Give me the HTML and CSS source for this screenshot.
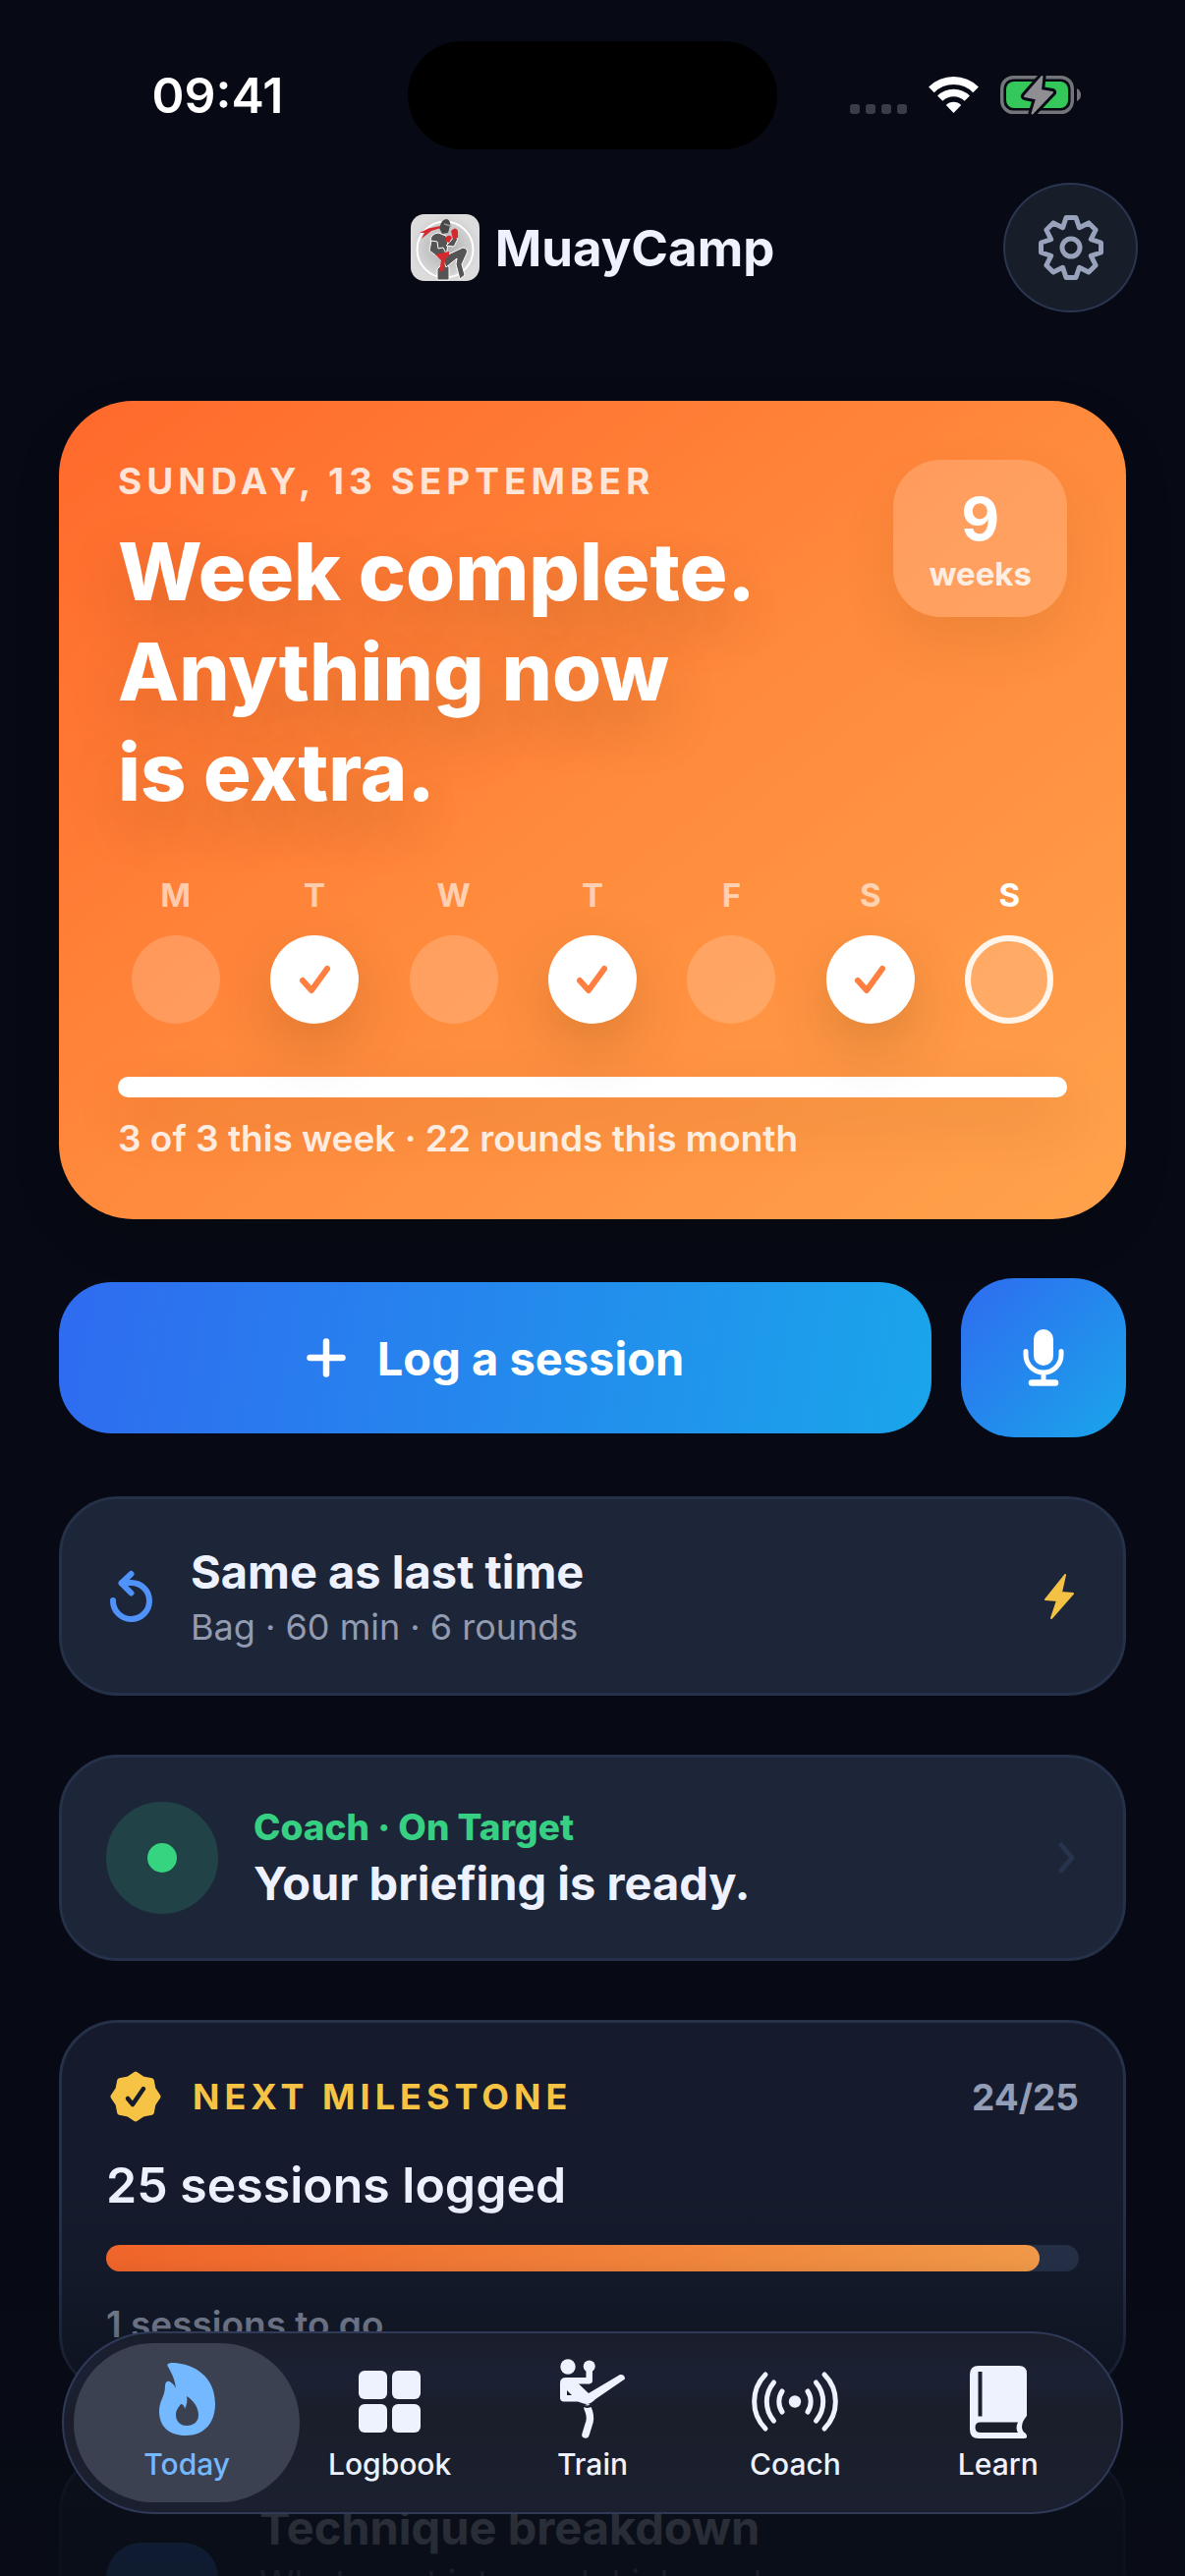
FILE: index.html
```
<!DOCTYPE html>
<html lang="en">

<head>
    <meta charset="UTF-8">
    <meta name="viewport" content="width=device-width, initial-scale=1.0">
    <title>MuayCamp</title>
    <link rel="stylesheet" href="styles.css">
</head>

<body>
    <div class="screen">
        <div class="status-bar">
            <span class="time">09:41</span>
            <span class="island"></span>
            <div class="status-icons">
                <span class="signal"><i></i><i></i><i></i><i></i></span>
                <svg class="wifi" width="51" height="38" viewBox="0 0 51 38" fill="none" stroke="#fff">
                    <path d="M2.9 13.4A32 32 0 0 1 48.1 13.4" stroke-width="8" />
                    <path d="M11.7 22.2A19.5 19.5 0 0 1 39.3 22.2" stroke-width="7.5" />
                    <path d="M25.5 37L17.8 29A11 11 0 0 1 33.2 29Z" fill="#fff" stroke="none" />
                </svg>
                <svg width="82" height="42" viewBox="0 -1 82 42">
                    <rect x="1.7" y="1.7" width="71.6" height="35.6" rx="11.5" fill="none" stroke="#74757b" stroke-width="3.4" />
                    <rect x="6" y="6" width="63" height="27" rx="8" fill="#34c759" />
                    <path d="M78 13Q82 15 82 19.5Q82 24 78 26Z" fill="#74757b" />
                    <path d="M42.500 1L25 21L37 23.500L32.500 38.500L53 17L41 15Z" fill="#8e8e93" stroke="#060913" stroke-width="8" stroke-linejoin="round" />
                    <path d="M42.500 1L25 21L37 23.500L32.500 38.500L53 17L41 15Z" fill="#8e8e93" stroke="#8e8e93" stroke-width="2" stroke-linejoin="round" />
                </svg>
            </div>
        </div>

        <header class="header">
            <div class="brand">
                <svg width="70" height="68" viewBox="0 0 70 68">
                    <defs>
                        <radialGradient id="logo-bg">
                            <stop offset="0" stop-color="#adadad" />
                            <stop offset="1" stop-color="#dcdcdc" />
                        </radialGradient>
                    </defs>
                    <rect width="70" height="68" rx="14" fill="url(#logo-bg)" />
                    <circle cx="35" cy="36" r="28.500" fill="none" stroke="#fff" stroke-width="2" />
                    <g fill="#555" stroke="#fff" stroke-width="1" stroke-linejoin="round">
                        <path d="M27 56L27 67H39L39 54L35 48Z" />
                        <path d="M20 26Q21 20 28 19L36 22L38 31L36 42L28 42L24 34Z" />
                        <path d="M21 27L19 37L28 44L36 40L33 34L28 35L27 28Z" />
                        <path d="M32 44L53 34Q59 35 57 40L52 51L55 62L50 66L46 51L47 45L36 54Z" />
                        <path d="M36 32L44 33L48 25L44 23L40 28Z" />
                    </g>
                    <path d="M31 9Q33 5 37 5Q41 7 40 12L38 19L32 20L29 14Z" fill="#484848" />
                    <g fill="#d42a2e">
                        <path d="M30 12L29 14.500L21 17L11 25L14 19L9 19L18 14.500Z" />
                        <path d="M41 17Q46 12 48 17L48 24L43 26Z" />
                        <path d="M36 23Q40 20 42 24L39 29L36 28Z" />
                        <path d="M25 41L39 38L39 42L35 46L34 57L29 59L31 47Z" />
                    </g>
                    <path d="M34 10L41 12" stroke="#999" stroke-width="1.500" />
                </svg>
                <h1>MuayCamp</h1>
            </div>
            <button class="settings" aria-label="Settings">
                <svg width="66" height="66" viewBox="-33 -33 66 66" fill="none" stroke="#98a2bb" stroke-width="5" stroke-linejoin="round">
                    <path d="M-5-30.500L5-30.500L8.400-20.300L18-25.100L25.100-18L20.300-8.400L30.500-5L30.500 5L20.300 8.400L25.100 18L18 25.100L8.400 20.300L5 30.500L-5 30.500L-8.400 20.300L-18 25.100L-25.100 18L-20.300 8.400L-30.500 5L-30.500-5L-20.300-8.400L-25.100-18L-18-25.100L-8.400-20.300Z" />
                    <circle r="9" />
                </svg>
            </button>
        </header>

        <main class="content">
            <section class="hero">
                <div class="hero-top">
                    <div>
                        <p class="date">SUNDAY, 13 SEPTEMBER</p>
                        <h2>Week complete.<br>Anything now<br>is extra.</h2>
                    </div>
                    <div class="streak">
                        <strong>9</strong>
                        <span>weeks</span>
                    </div>
                </div>
                <div class="days">
                    <div class="day">M<span class="dot"></span></div>
                    <div class="day">T<span class="dot done"><svg width="33" height="30" viewBox="0 0 33 30"><path d="M4 16L13 26L29 4" /></svg></span></div>
                    <div class="day">W<span class="dot"></span></div>
                    <div class="day">T<span class="dot done"><svg width="33" height="30" viewBox="0 0 33 30"><path d="M4 16L13 26L29 4" /></svg></span></div>
                    <div class="day">F<span class="dot"></span></div>
                    <div class="day">S<span class="dot done"><svg width="33" height="30" viewBox="0 0 33 30"><path d="M4 16L13 26L29 4" /></svg></span></div>
                    <div class="day today">S<span class="dot"></span></div>
                </div>
                <div class="week-bar"></div>
                <p class="week-note">3 of 3 this week · 22 rounds this month</p>
            </section>

            <div class="actions">
                <button class="log-btn">
                    <svg width="40" height="40" viewBox="0 0 40 40" stroke="#fff" stroke-width="6.500" stroke-linecap="round">
                        <path d="M20 3.500V36.500M3.500 20H36.500" />
                    </svg>
                    Log a session
                </button>
                <button class="mic-btn" aria-label="Voice log">
                    <svg width="42" height="58" viewBox="0 0 42 58" fill="none" stroke="#fff" stroke-linecap="round">
                        <rect x="11" y="0" width="20" height="37" rx="10" fill="#fff" stroke="none" />
                        <path d="M3 22.500V26A18 18 0 0 0 39 26V22.500M21 45V53" stroke-width="5" />
                        <path d="M9 54.500H33" stroke-width="6.500" />
                    </svg>
                </button>
            </div>

            <button class="card repeat">
                <svg class="repeat-icon" width="50" height="54" viewBox="-4 -1 50 54" fill="none" stroke="#4f93fa" stroke-width="6" stroke-linecap="round" stroke-linejoin="round">
                    <path d="M3 30A18.500 18.500 0 1 0 21.500 12H12" />
                    <path d="M21.500 3L11.500 12.500L21.500 22.500" />
                </svg>
                <span class="card-text">
                    <span class="card-title">Same as last time</span>
                    <span class="card-sub">Bag · 60 min · 6 rounds</span>
                </span>
                <svg width="36" height="46" viewBox="0 0 36 46" fill="#f3c245" stroke="#f3c245" stroke-width="2" stroke-linejoin="round">
                    <path d="M22 1L2 26L14 27L8 45L30 20L18 19Z" />
                </svg>
            </button>

            <a class="card coach" href="#coach">
                <span class="coach-dot"></span>
                <span class="card-text">
                    <span class="card-label">Coach · On Target</span>
                    <span class="card-title">Your briefing is ready.</span>
                </span>
                <svg width="22" height="32" viewBox="0 0 22 32" fill="none" stroke="#28334e" stroke-width="5" stroke-linecap="round" stroke-linejoin="round">
                    <path d="M4 3L15 16L4 29" />
                </svg>
            </a>

            <section class="card milestone">
                <div class="milestone-head">
                    <svg width="58" height="52" viewBox="-30 -26 58 52">
                        <path d="M0-23L7.500-18L16.300-16.300L18-7.500L23 0L18 7.500L16.300 16.300L7.500 18L0 23L-7.500 18L-16.300 16.300L-18 7.500L-23 0L-18-7.500L-16.300-16.300L-7.500-18Z" fill="#f6c344" stroke="#f6c344" stroke-width="5" stroke-linejoin="round" />
                        <path d="M-8 2L-3 8L8-8" fill="none" stroke="#151b2b" stroke-width="4.500" stroke-linecap="round" stroke-linejoin="round" />
                    </svg>
                    <h3>NEXT MILESTONE</h3>
                    <span class="count">24/25</span>
                </div>
                <p class="milestone-name">25 sessions logged</p>
                <div class="progress">
                    <div class="progress-fill" style="width: 96%"></div>
                </div>
                <p class="card-sub to-go">1 sessions to go</p>
            </section>

            <section class="card lesson">
                <span class="lesson-icon"></span>
                <span class="card-text">
                    <span class="card-title">Technique breakdown</span>
                    <span class="card-sub">What went into each kick, and</span>
                </span>
            </section>
        </main>

        <div class="fade"></div>

        <nav class="tab-bar">
            <a class="tab active" href="#today">
                <svg width="57" height="82" viewBox="0 -4 57 82" fill="currentColor" fill-rule="evenodd">
                    <path d="M9 4C7 1 10 0 14 0C36 1 57 14 57 42C57 61 46 74 27 74C10 74 0 65 0 49C0 39 6 34 6 24C6 18 10 18 12 20C15 22 16 24 17 26C16 17 13 11 9 4ZM28 34C29 39 28 43 26 47C26 44 24 42 22 42C20 45 17 48 17 53C17 59 21 64 28 64C35 64 40 60 40 53C40 44 33 37 28 34Z" />
                </svg>
                Today
            </a>
            <a class="tab" href="#logbook">
                <svg width="64" height="82" viewBox="0 -12 64 82" fill="currentColor">
                    <rect x="0" y="0" width="29" height="29" rx="6" />
                    <rect x="34" y="0" width="29" height="29" rx="6" />
                    <rect x="0" y="34" width="29" height="29" rx="6" />
                    <rect x="34" y="34" width="29" height="29" rx="6" />
                </svg>
                Logbook
            </a>
            <a class="tab" href="#train">
                <svg width="66" height="82" viewBox="0 0 66 82" fill="currentColor">
                    <circle cx="8" cy="8" r="7.700" />
                    <circle cx="29.700" cy="7.500" r="6" />
                    <path d="M29.700 9V22" stroke="currentColor" stroke-width="6.500" stroke-linecap="round" />
                    <path d="M0 24.500Q0 19 6 19H30V25.500H19L29 35L61 16Q66 15.500 66 20.500L36 41Q30 47.500 24 45.500L18 43.500H4Q0 43.500 0 39.500ZM7 32V37H12Z" fill-rule="evenodd" />
                    <path d="M28 50Q31.500 58 30 64L26 77" stroke="currentColor" stroke-width="7.500" stroke-linecap="round" stroke-linejoin="round" fill="none" />
                    <path d="M20 46Q28 51.500 35 46" stroke="#1a1e2d" stroke-width="2.500" fill="none" />
                </svg>
                Train
            </a>
            <a class="tab" href="#coach">
                <svg width="88" height="82" viewBox="0 -13 88 82" fill="none" stroke="currentColor" stroke-width="5" stroke-linecap="round">
                    <circle cx="44" cy="30.500" r="6.200" fill="currentColor" stroke="none" />
                    <path d="M31 20A19 19 0 0 0 31 41M22.500 11A30 30 0 0 0 22.500 50M14 3A39 39 0 0 0 14 58" />
                    <path d="M57 20A19 19 0 0 1 57 41M65.500 11A30 30 0 0 1 65.500 50M74 3A39 39 0 0 1 74 58" />
                </svg>
                Coach
            </a>
            <a class="tab" href="#learn">
                <svg width="58" height="82" viewBox="0 -7 58 82" fill="currentColor" fill-rule="evenodd">
                    <path d="M9 0H50Q58 0 58 8V51Q53 57 53 62Q53 67 57 69Q60 74 55 74H9Q0 74 0 65V9Q0 0 9 0ZM11 57.500H49Q46 63 49 68H11Q5.500 68 5.500 62.500Q5.500 57.500 11 57.500ZM8.500 6V51.500H12.500V6Z" />
                </svg>
                Learn
            </a>
        </nav>
    </div>
</body>

</html>
```
FILE: styles.css
```
* {
    box-sizing: border-box;
}

body {
    margin: 0;
    background: #070a14;
    color: #eef2ff;
    font-family: Inter, "Liberation Sans", sans-serif;
}

h1, h2, h3, p {
    margin: 0;
}

button {
    border: none;
    font: inherit;
    color: inherit;
    cursor: pointer;
}

a {
    color: inherit;
    text-decoration: none;
}

svg {
    display: block;
    flex-shrink: 0;
}

.screen {
    position: relative;
    height: 100vh;
    overflow: hidden;
}

/* status bar */
.status-bar {
    display: grid;
    grid-template-columns: 1fr 376px 1fr;
    align-items: center;
    padding-top: 42px;
}

.time {
    padding-left: 28px;
    text-align: center;
    font-size: 50px;
    font-weight: 600;
    color: #fff;
}

.island {
    height: 110px;
    border-radius: 55px;
    background: #000;
}

.status-icons {
    display: flex;
    justify-content: flex-end;
    align-items: center;
    gap: 22px;
    padding-right: 106px;
}

.signal {
    display: flex;
    align-self: flex-end;
    gap: 6px;
    padding-bottom: 2px;
}

.signal i {
    width: 10px;
    height: 10px;
    border-radius: 3px;
    background: #3b3d46;
}

/* header */
.header {
    display: grid;
    grid-template-columns: 1fr auto 1fr;
    align-items: center;
    margin-top: 34px;
    padding: 0 48px;
}

.brand {
    grid-column: 2;
    display: flex;
    align-items: center;
    gap: 16px;
}

.brand h1 {
    font-size: 51px;
    font-weight: 700;
}

.settings {
    justify-self: end;
    display: flex;
    align-items: center;
    justify-content: center;
    width: 137px;
    height: 132px;
    padding: 0;
    border: 2px solid #2a3550;
    border-radius: 50%;
    background: #181d2a;
}

.content {
    display: flex;
    flex-direction: column;
    gap: 60px;
    padding: 90px 60px 0;
}

/* hero */
.hero {
    padding: 60px;
    border-radius: 76px;
    background: linear-gradient(142deg, #ff692b, #ff8a3c 50%, #ffa24b);
    box-shadow: 0 20px 50px rgba(0, 0, 0, 0.12);
    color: #fff;
}

.hero-top {
    display: flex;
    justify-content: space-between;
    align-items: flex-start;
}

.date {
    font-size: 37px;
    font-weight: 700;
    line-height: 43px;
    letter-spacing: 5px;
    color: rgba(255, 255, 255, 0.82);
}

.hero h2 {
    margin-top: 20px;
    font-size: 81px;
    font-weight: 800;
    line-height: 102px;
    text-shadow: 0 24px 60px rgba(60, 50, 0, 0.22);
}

.streak {
    display: flex;
    flex-direction: column;
    align-items: center;
    padding: 24px 36px;
    border-radius: 48px;
    background: rgba(255, 255, 255, 0.18);
    box-shadow: 0 24px 54px rgba(80, 60, 0, 0.1);
}

.streak strong {
    font-size: 60px;
    font-weight: 700;
    line-height: 72px;
}

.streak span {
    font-size: 33px;
    font-weight: 700;
    line-height: 40px;
    opacity: 0.82;
}

.days {
    display: grid;
    grid-template-columns: repeat(7, 1fr);
    gap: 24px;
    margin-top: 54px;
}

.day {
    display: flex;
    flex-direction: column;
    align-items: center;
    gap: 21px;
    font-size: 33px;
    font-weight: 700;
    line-height: 40px;
    color: rgba(255, 255, 255, 0.62);
}

.dot {
    display: flex;
    align-items: center;
    justify-content: center;
    width: 90px;
    height: 90px;
    border-radius: 50%;
    background: rgba(255, 255, 255, 0.18);
}

.dot.done {
    background: #fff;
    box-shadow: 0 24px 60px rgba(80, 50, 0, 0.2);
}

.dot path {
    fill: none;
    stroke: #ff7f40;
    stroke-width: 6px;
    stroke-linecap: round;
    stroke-linejoin: round;
}

.today {
    color: #fff;
}

.today .dot {
    border: 6px solid #fff5ea;
}

.week-bar {
    height: 21px;
    margin-top: 54px;
    border-radius: 11px;
    background: #fff;
    box-shadow: 0 24px 54px rgba(80, 50, 0, 0.15);
}

.week-note {
    margin-top: 20px;
    font-size: 37px;
    font-weight: 600;
    line-height: 44px;
    color: rgba(255, 255, 255, 0.86);
}

/* buttons */
.actions {
    display: flex;
    align-items: center;
    gap: 30px;
}

.log-btn {
    flex: 1;
    display: flex;
    align-items: center;
    justify-content: center;
    gap: 32px;
    height: 154px;
    border-radius: 54px;
    background: linear-gradient(100deg, #2f6bf0, #1aa5ea);
    color: #fff;
    font-size: 47px;
    font-weight: 700;
}

.mic-btn {
    display: flex;
    align-items: center;
    justify-content: center;
    width: 168px;
    height: 162px;
    border-radius: 54px;
    background: linear-gradient(135deg, #2f6bf0, #1aa5ea);
}

/* cards */
.card {
    display: flex;
    align-items: center;
    gap: 36px;
    padding: 45px;
    border: 3px solid #253049;
    border-radius: 60px;
    background: #1d2539;
    text-align: left;
}

.card-text {
    flex: 1;
    display: flex;
    flex-direction: column;
    gap: 6px;
}

.card-title {
    font-size: 47px;
    font-weight: 700;
    line-height: 57px;
}

.card-sub {
    font-size: 36px;
    line-height: 44px;
    color: #929bb0;
}

.card-label {
    font-size: 37px;
    font-weight: 800;
    line-height: 44px;
    color: #37cf82;
}

.coach-dot {
    width: 114px;
    height: 114px;
    border: 42px solid #214246;
    border-radius: 50%;
    background: #36d380;
}

.milestone {
    flex-direction: column;
    align-items: stretch;
    gap: 32px;
    background: #151b2c;
}

.milestone-head {
    display: flex;
    align-items: center;
    gap: 30px;
    height: 60px;
}

.milestone-head h3 {
    flex: 1;
    font-size: 36px;
    font-weight: 700;
    letter-spacing: 5px;
    color: #f6c344;
}

.count {
    font-size: 37px;
    font-weight: 700;
    color: #939db5;
}

.milestone-name {
    font-size: 50px;
    font-weight: 600;
    line-height: 57px;
}

.progress {
    height: 27px;
    border-radius: 14px;
    background: #263149;
}

.progress-fill {
    height: 100%;
    border-radius: 14px;
    background: linear-gradient(90deg, #ff6a2b, #ffa24b);
}

.to-go {
    font-size: 37px;
    font-weight: 600;
}

.lesson {
    align-items: flex-start;
    gap: 42px;
    background: #151b2c;
}

.lesson-icon {
    width: 114px;
    height: 114px;
    margin-top: 44px;
    border-radius: 36px;
    background: #3d80e6;
}

/* content fades out behind the tab bar */
.fade {
    position: absolute;
    left: 0;
    right: 0;
    bottom: 0;
    height: 400px;
    background: linear-gradient(rgba(8, 12, 21, 0), rgba(8, 12, 21, 0.07) 20%, rgba(8, 12, 21, 0.3) 36%, rgba(8, 12, 21, 0.6) 54%, rgba(8, 12, 21, 0.85) 85%, rgba(8, 12, 21, 0.88));
}

.tab-bar {
    position: absolute;
    left: 63px;
    right: 63px;
    bottom: 63px;
    display: grid;
    grid-template-columns: repeat(5, 1fr);
    padding: 10px 22px;
    border: 2px solid #2f3a59;
    border-radius: 93px;
    background: linear-gradient(#1a1e2b, #1b2134 25%, #1a1e2a 45%, #1b2030);
}

.tab {
    display: flex;
    flex-direction: column;
    align-items: center;
    height: 162px;
    margin: 0 -12px;
    padding-top: 16px;
    border-radius: 81px;
    font-size: 30px;
    font-weight: 500;
    line-height: 50px;
}

.tab.active {
    background: #3c4152;
    color: #74b8ff;
}
```
